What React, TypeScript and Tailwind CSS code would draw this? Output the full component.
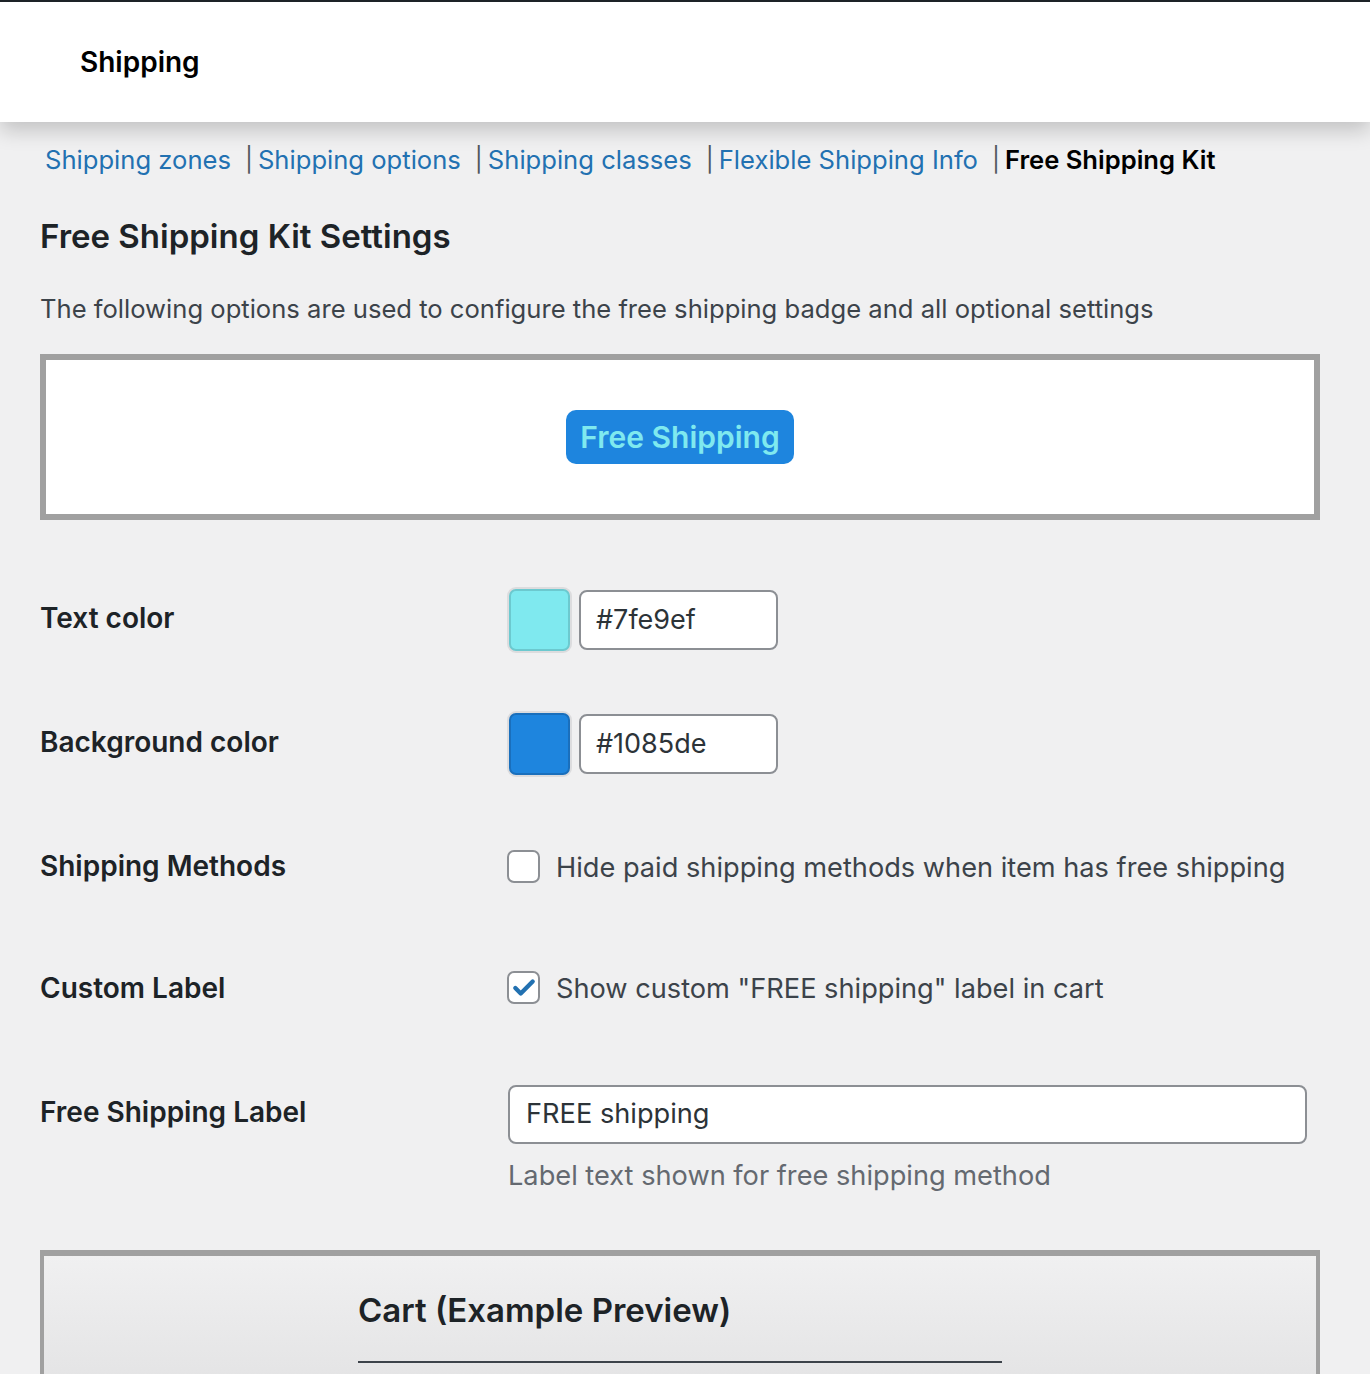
import { Check } from 'lucide-react';

const NAV = ['Shipping zones', 'Shipping options', 'Shipping classes', 'Flexible Shipping Info'];

function Row({ label, children, h }: { label: string; children: React.ReactNode; h: string }) {
  return (
    <div className={`flex ${h}`}>
      <div className="w-[469px] shrink-0 text-[28px] font-semibold text-[#1d2327] pt-[9px] leading-[40px]">{label}</div>
      <div className="flex-1">{children}</div>
    </div>
  );
}

export default function App() {
  return (
    <div
      className="min-h-[1374px] bg-[#f0f0f1] text-[#3c434a]"
      style={{ fontFamily: 'Inter, "Noto Sans", sans-serif' }}
    >
      {/* Header */}
      <div className="border-t-2 border-[#1d2327] bg-white h-[122px] flex items-center pl-[80px] shadow-[0_8px_20px_rgba(0,0,0,0.2)] relative">
        <h1 className="text-[28px] font-semibold text-black">Shipping</h1>
      </div>

      {/* Sub nav */}
      <div className="flex items-center pl-[45px] pt-[20px] text-[25.6px] leading-[36px]">
        {NAV.map((n) => (
          <span key={n} className="flex items-center">
            <a className="text-[#2271b1]">{n}</a>
            <span className="text-[#50575e] pl-[14px] pr-[5px] text-[24px]">|</span>
          </span>
        ))}
        <span className="font-semibold text-black">Free Shipping Kit</span>
      </div>

      <div className="px-[40px] pr-[50px]">
        <h2 className="text-[33px] font-semibold text-[#1d2327] mt-[36px] leading-[44px]">Free Shipping Kit Settings</h2>
        <p className="text-[25.6px] mt-[33px] leading-[36px]">
          The following options are used to configure the free shipping badge and all optional settings
        </p>

        {/* Badge preview */}
        <div className="mt-[27px] border-[6px] border-[#a0a0a0] bg-white h-[166px] flex items-center justify-center">
          <span className="bg-[#1e85de] text-[#7fe9ef] text-[30px] font-semibold rounded-[10px] px-[14px] h-[54px] flex items-center">
            Free Shipping
          </span>
        </div>

        <div className="mt-[69px]">
          <Row label="Text color" h="h-[124px]">
            <div className="flex items-center gap-[9px]">
              <div className="w-[61px] h-[62px] rounded-[7px] bg-[#7fe9ef] border-2 border-[#6cc9cf] ring-2 ring-[#dcdcde]" />
              <div className="w-[199px] h-[60px] rounded-[8px] border-2 border-[#8c8f94] bg-white flex items-center px-[15px] text-[27px] text-[#2c3338]">
                #7fe9ef
              </div>
            </div>
          </Row>
          <Row label="Background color" h="h-[124px]">
            <div className="flex items-center gap-[9px]">
              <div className="w-[61px] h-[62px] rounded-[7px] bg-[#1e85de] border-2 border-[#1a6fbc] ring-2 ring-[#dcdcde]" />
              <div className="w-[199px] h-[60px] rounded-[8px] border-2 border-[#8c8f94] bg-white flex items-center px-[15px] text-[27px] text-[#2c3338]">
                #1085de
              </div>
            </div>
          </Row>
          <Row label="Shipping Methods" h="h-[122px]">
            <div className="flex items-center gap-[16px] pt-[10px] -ml-[2px]">
              <div className="w-[33px] h-[33px] rounded-[7px] border-2 border-[#8c8f94] bg-white" />
              <span className="text-[27.2px] text-[#3c434a] leading-[36px] mt-[3px]">Hide paid shipping methods when item has free shipping</span>
            </div>
          </Row>
          <Row label="Custom Label" h="h-[124px]">
            <div className="flex items-center gap-[16px] pt-[9px] -ml-[2px]">
              <div className="w-[33px] h-[33px] rounded-[7px] border-2 border-[#8c8f94] bg-white flex items-center justify-center">
                <Check className="w-[26px] h-[26px] text-[#2271b1]" strokeWidth={4} />
              </div>
              <span className="text-[27.2px] text-[#3c434a] leading-[36px] mt-[3px]">Show custom "FREE shipping" label in cart</span>
            </div>
          </Row>
          <Row label="Free Shipping Label" h="h-[168px]">
            <div className="-ml-[1px] pt-[2px]">
              <div className="w-[799px] h-[59px] rounded-[8px] border-2 border-[#8c8f94] bg-white flex items-center px-[16px] text-[27.2px] text-[#2c3338]">
                FREE shipping
              </div>
              <p className="mt-[12px] text-[27.2px] text-[#646970]">Label text shown for free shipping method</p>
            </div>
          </Row>
        </div>

        {/* Cart preview */}
        <div className="mt-[-1px] border-x-[4px] border-t-[6px] border-[#a0a0a0] h-[130px] bg-gradient-to-b from-[#f0f0f1] to-[#e4e4e5] pl-[314px] pt-[32px]">
          <h2 className="text-[33px] font-semibold text-[#1d2327] leading-[44px]">Cart (Example Preview)</h2>
          <div className="mt-[29px] w-[644px] h-[2px] bg-[#3c434a]" />
        </div>
      </div>
    </div>
  );
}
